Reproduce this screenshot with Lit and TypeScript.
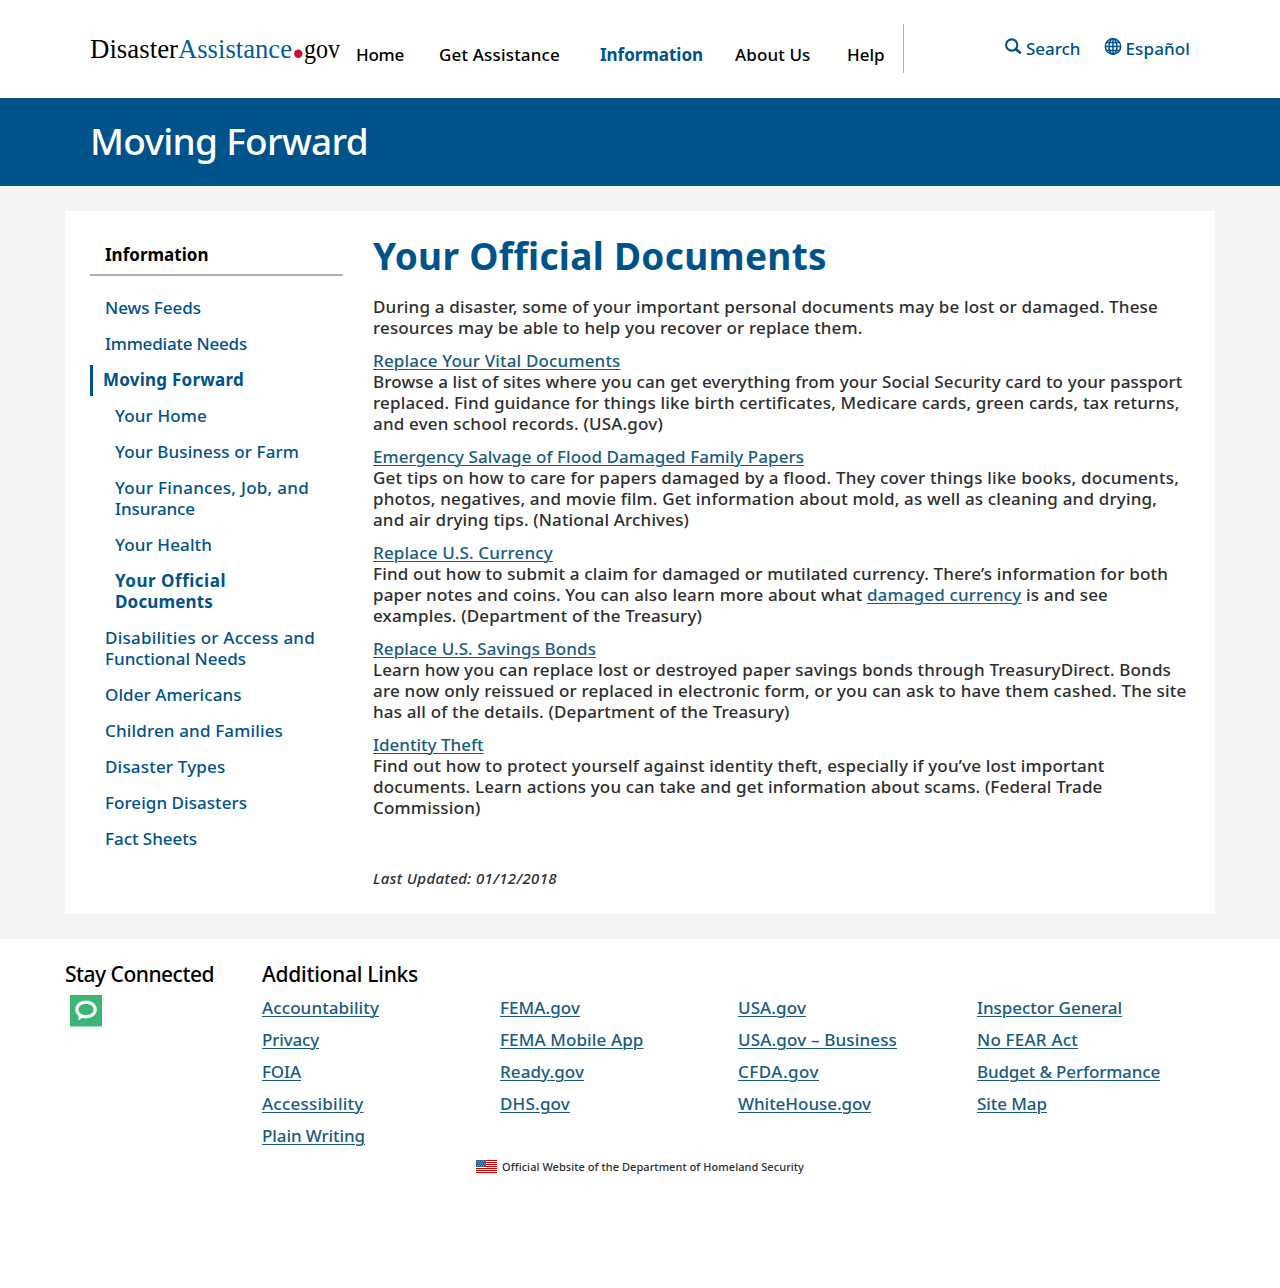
import { LitElement, html, css, nothing } from "lit";
import { customElement } from "lit/decorators.js";

type Line = [content: unknown, width: number];
type Item = { lines: Line[]; kind?: string };

const SIDE: Item[] = [
  { lines: [["News Feeds", 96]] },
  { lines: [["Immediate Needs", 142]] },
  { lines: [["Moving Forward", 141]], kind: "open" },
  { lines: [["Your Home", 92]], kind: "sub" },
  { lines: [["Your Business or Farm", 184]], kind: "sub" },
  { lines: [["Your Finances, Job, and", 194], ["Insurance", 80]], kind: "sub" },
  { lines: [["Your Health", 97]], kind: "sub" },
  { lines: [["Your Official", 111], ["Documents", 98]], kind: "sub current" },
  { lines: [["Disabilities or Access and", 210], ["Functional Needs", 141]] },
  { lines: [["Older Americans", 136.5]] },
  { lines: [["Children and Families", 178]] },
  { lines: [["Disaster Types", 120.5]] },
  { lines: [["Foreign Disasters", 142]] },
  { lines: [["Fact Sheets", 92]] },
];

const LINKS: [string, number][][] = [
  [["Accountability", 117], ["Privacy", 57], ["FOIA", 39], ["Accessibility", 101.5], ["Plain Writing", 103]],
  [["FEMA.gov", 80], ["FEMA Mobile App", 143.5], ["Ready.gov", 84], ["DHS.gov", 70]],
  [["USA.gov", 68], ["USA.gov – Business", 159], ["CFDA.gov", 81], ["WhiteHouse.gov", 133]],
  [["Inspector General", 145], ["No FEAR Act", 101], ["Budget & Performance", 183], ["Site Map", 70]],
];

/** Text tracked out to a given measure once it has been laid out. */
const fit = (t: unknown, w?: number) => html`<span class="fit" data-w=${w ?? nothing}>${t}</span>`;
const link = (t: string) => html`<a class="link">${t}</a>`;
const line = ([t, w]: Line) => html`<span class="line">${fit(t, w)}</span>`;

const ARTICLES: Line[][] = [
  [
    ["During a disaster, some of your important personal documents may be lost or damaged. These", 785],
    ["resources may be able to help you recover or replace them.", 489.5],
  ],
  [
    [link("Replace Your Vital Documents"), 247.5],
    ["Browse a list of sites where you can get everything from your Social Security card to your passport", 809.5],
    ["replaced. Find guidance for things like birth certificates, Medicare cards, green cards, tax returns,", 806.5],
    ["and even school records. (USA.gov)", 290],
  ],
  [
    [link("Emergency Salvage of Flood Damaged Family Papers"), 431],
    ["Get tips on how to care for papers damaged by a flood. They cover things like books, documents,", 806],
    ["photos, negatives, and movie film. Get information about mold, as well as cleaning and drying,", 784],
    ["and air drying tips. (National Archives)", 316],
  ],
  [
    [link("Replace U.S. Currency"), 180],
    ["Find out how to submit a claim for damaged or mutilated currency. There’s information for both", 795],
    [html`paper notes and coins. You can also learn more about what ${link("damaged currency")} is and see`, 735],
    ["examples. (Department of the Treasury)", 329],
  ],
  [
    [link("Replace U.S. Savings Bonds"), 223],
    ["Learn how you can replace lost or destroyed paper savings bonds through TreasuryDirect. Bonds", 798],
    ["are now only reissued or replaced in electronic form, or you can ask to have them cashed. The site", 813.5],
    ["has all of the details. (Department of the Treasury)", 416.5],
  ],
  [
    [link("Identity Theft"), 110.5],
    ["Find out how to protect yourself against identity theft, especially if you’ve lost important", 731.5],
    ["documents. Learn actions you can take and get information about scams. (Federal Trade", 729.5],
    ["Commission)", 107.5],
  ],
];

@customElement("app-root")
export class AppRoot extends LitElement {
  static styles = css`
    :host {
      display: block;
      min-height: 1288px;
      background: #fff;
      color: #2e2e2e;
      font: 500 17px/21px "Noto Sans", "Open Sans", sans-serif;
      white-space: nowrap;
      font-variant-ligatures: none;
    }
    * { box-sizing: border-box; }
    header { height: 98px; padding: 24px 90px 0; display: flex; }
    .logo { width: 250px; height: 49px; display: block; flex: none; overflow: visible; }
    .logo text { font: 27px "Liberation Serif", serif; letter-spacing: 0; }
    nav {
      display: grid;
      grid-template-columns: 83px 161px 135px 112px 56px;
      width: 564px;
      height: 49px;
      padding: 20px 0 0 16px;
      border-right: 1px solid #adadad;
      color: #000;
    }
    .active { color: #00528a; font-weight: 700; }
    .tools { display: flex; color: #00528a; margin-left: 101px; padding-top: 12px; gap: 23px; height: 40px; }
    .tool { display: flex; gap: 3px; line-height: 25px; }
    .tool + .tool { gap: 4px; }
    .tool svg { width: 18px; height: 18px; display: block; margin-top: 1px; }
    .banner { height: 88px; background: #00528a; color: #fff; padding: 0 90px; font-size: 37px; line-height: 86px; }
    .page { background: #f4f4f4; height: 753px; padding: 25px 65px; }
    .card { background: #fff; height: 703px; display: flex; padding: 0 25px; gap: 30px; }
    aside { width: 253px; color: #00528a; }
    .side-title { height: 65px; padding: 33px 15px 0; border-bottom: 2px solid #a9b0bc; color: #000; font-weight: 700; margin-bottom: 17px; }
    .side-item { padding: 4px 0 6px 15px; margin-bottom: 5px; }
    .line { display: block; }
    .sub { padding-left: 25px; }
    .current { font-weight: 700; }
    .open { border-left: 3px solid #00528a; padding-left: 10px; font-weight: 700; }
    h1 { margin: 0 0 18px; padding-top: 22px; font-size: 37px; line-height: 45px; color: #00528a; font-weight: 700; }
    p { margin: 0 0 12px; }
    .link { color: #195b80; text-decoration: underline; text-underline-offset: 2px; text-decoration-thickness: 1px; }
    .updated { font-style: italic; font-size: 15px; padding-top: 38px; }
    footer { padding: 23px 65px 0; }
    .foot { display: flex; }
    .stay { width: 197px; }
    .heading { font-size: 21px; line-height: 24px; color: #000; }
    .badge { display: block; width: 32px; height: 32px; margin: 9px 0 0 5px; }
    .links { display: grid; grid-template-columns: 238px 238px 239px 200px; padding-top: 6px; }
    .link-row { line-height: 32px; }
    .official { display: flex; gap: 5px; padding-left: 411px; align-items: center; font-size: 11px; line-height: 16px; height: 17px; margin-top: 6px; }
    .flag { width: 21px; height: 13px; display: block; }
  `;

  firstUpdated() {
    this.renderRoot.querySelectorAll<HTMLElement>(".fit[data-w]").forEach((el) => {
      const chars = el.textContent!.length;
      const natural = el.getBoundingClientRect().width;
      el.style.letterSpacing = `${((Number(el.dataset.w) - natural) / chars).toFixed(4)}px`;
    });
  }

  render() {
    return html`
      <header>
        <svg class="logo" viewBox="0 0 250 49">
          <text x="0" y="34" textLength="88" lengthAdjust="spacingAndGlyphs">Disaster</text>
          <text x="88" y="34" fill="#075b95" textLength="114" lengthAdjust="spacingAndGlyphs">Assistance</text>
          <circle cx="208.300" cy="29.700" r="4.200" fill="#c8102e" />
          <text x="214" y="34" textLength="36" lengthAdjust="spacingAndGlyphs">gov</text>
        </svg>
        <nav>
          <a>${fit("Home", 48)}</a>
          <a>${fit("Get Assistance", 121)}</a>
          <a class="active">${fit("Information", 103)}</a>
          <a>${fit("About Us", 75.5)}</a>
          <a>${fit("Help", 37.5)}</a>
        </nav>
        <div class="tools">
          <a class="tool">
            <svg viewBox="0 0 18 18" fill="none" stroke="#00528a">
              <circle cx="6.700" cy="8" r="5.600" stroke-width="2.100" />
              <path d="M11 12.200l3.800 3.300" stroke-width="2.800" stroke-linecap="round" />
            </svg>
            ${fit("Search", 54.5)}
          </a>
          <a class="tool">
            <svg viewBox="0 0 18 18" fill="none" stroke="#00528a" stroke-width="1.500">
              <circle cx="9" cy="9.500" r="7.700" />
              <ellipse cx="9" cy="9.500" rx="4" ry="7.700" />
              <path d="M9 1.800v15.400M1.300 9.500h15.400M2.700 5.500h12.600M2.700 13.500h12.600" />
            </svg>
            ${fit("Español", 64.5)}
          </a>
        </div>
      </header>
      <div class="banner">${fit("Moving Forward", 278)}</div>
      <div class="page">
        <div class="card">
          <aside>
            <div class="side-title">${fit("Information", 103.5)}</div>
            ${SIDE.map((i) => html`<div class="side-item ${i.kind ?? ""}">${i.lines.map(line)}</div>`)}
          </aside>
          <main>
            <h1>${fit("Your Official Documents", 454)}</h1>
            ${ARTICLES.map((a) => html`<p>${a.map(line)}</p>`)}
            <div class="updated">${fit("Last Updated: 01/12/2018", 184)}</div>
          </main>
        </div>
      </div>
      <footer>
        <div class="foot">
          <div class="stay">
            <div class="heading">${fit("Stay Connected", 149)}</div>
            <svg class="badge" viewBox="0 0 32 32">
              <path fill="#3cb674" d="M0 0h32v31H0z" />
              <path fill="#a5dcbe" d="M0 31h32v1H0z" />
              <ellipse cx="16" cy="14.500" rx="9.200" ry="7.300" fill="none" stroke="#fff" stroke-width="3.200" />
              <path fill="#fff" d="M8.500 19v6.500l5-3.700z" />
            </svg>
          </div>
          <div>
            <div class="heading">${fit("Additional Links", 156)}</div>
            <div class="links">
              ${LINKS.map((c) => html`<div>${c.map(([t, w]) => html`<div class="link-row">${fit(link(t), w)}</div>`)}</div>`)}
            </div>
          </div>
        </div>
        <div class="official">
          <svg class="flag" viewBox="0 0 21 13">
            <path fill="#fff" d="M0 0h21v13H0z" />
            <path fill="#d00000" d="M0 0h21v1H0zM0 2h21v1H0zM0 4h21v1H0zM0 6h21v1H0zM0 8h21v1H0zM0 10h21v1H0zM0 12h21v1H0z" />
            <path fill="#2f6396" d="M0 0h10v7H0z" />
            <path stroke="#6f9cc4" stroke-dasharray="1 1" d="M1 1.500h8M2 3.500h8M1 5.500h8" />
          </svg>
          ${fit("Official Website of the Department of Homeland Security", 302)}
        </div>
      </footer>
    `;
  }
}
